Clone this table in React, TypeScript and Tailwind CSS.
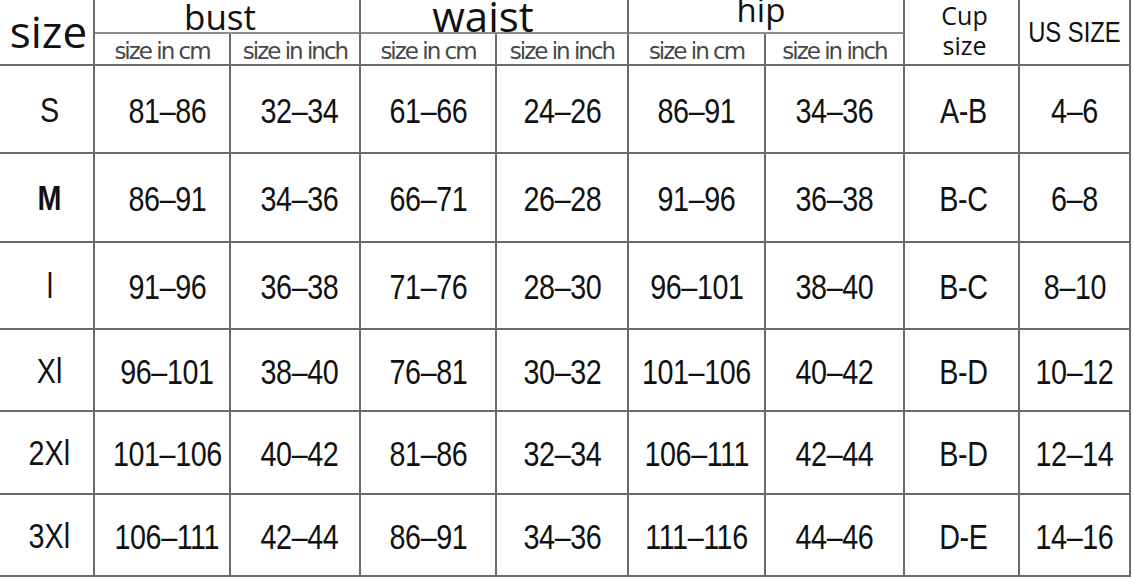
import React from "react";

const rows: { size: string; bold?: boolean; vals: string[]; h: string }[] = [
  { size: "S", vals: ["81–86", "32–34", "61–66", "24–26", "86–91", "34–36", "A-B", "4–6"], h: "h-[88px]" },
  { size: "M", bold: true, vals: ["86–91", "34–36", "66–71", "26–28", "91–96", "36–38", "B-C", "6–8"], h: "h-[89px]" },
  { size: "l", vals: ["91–96", "36–38", "71–76", "28–30", "96–101", "38–40", "B-C", "8–10"], h: "h-[87px]" },
  { size: "Xl", vals: ["96–101", "38–40", "76–81", "30–32", "101–106", "40–42", "B-D", "10–12"], h: "h-[82px]" },
  { size: "2Xl", vals: ["101–106", "40–42", "81–86", "32–34", "106–111", "42–44", "B-D", "12–14"], h: "h-[83px]" },
  { size: "3Xl", vals: ["106–111", "42–44", "86–91", "34–36", "111–116", "44–46", "D-E", "14–16"], h: "h-[82px]" },
];

const narrow =
  "inline-block whitespace-nowrap shrink-0 scale-x-[0.82] font-['Liberation_Sans','Arial',sans-serif]";
const open = "font-['Open_Sans','Noto_Sans',sans-serif]";
const sub =
  "whitespace-nowrap font-['DejaVu_Sans',sans-serif] text-[23px] tracking-[-2px] text-[#474747] leading-none mt-[4px]";

const colPad = ["pl-[10px]", "pl-[8px]", "", "", "", "", "pl-[4px]", ""];

export default function App() {
  return (
    <div className="w-[1133px] h-[578px] bg-white text-[#111111] overflow-hidden">
      <div className="grid grid-cols-[95px_136px_130px_136px_132px_137px_139px_115px_111px] grid-rows-[34px_32px]">
        {/* header */}
        <div className="row-span-2 border-r-2 border-b-2 border-[#6a6a6a] flex items-center justify-center">
          <span className={`${open} text-[44px] leading-none mb-[3px] ml-[4px]`}>size</span>
        </div>
        <div className="col-span-2 border-r-2 border-b-2 border-r-[#6a6a6a] border-b-[#8c8c8c] flex items-center justify-center">
          <span className={`${open} text-[35px] leading-none mr-[14px]`}>bust</span>
        </div>
        <div className="col-span-2 border-r-2 border-b-2 border-r-[#6a6a6a] border-b-[#8c8c8c] flex items-center justify-center">
          <span className={`${open} text-[42px] leading-none mr-[22px]`}>waist</span>
        </div>
        <div className="col-span-2 border-r-2 border-b-2 border-r-[#6a6a6a] border-b-[#8c8c8c] flex items-start justify-center">
          <span className={`${open} text-[33px] leading-none -mt-[7px] mr-[10px]`}>hip</span>
        </div>
        <div className="row-span-2 border-r-2 border-b-2 border-[#6a6a6a] flex items-center justify-center">
          <span className={`${open} text-[25px] leading-[30px] text-center -mt-[4px] ml-[6px]`}>
            Cup
            <br />
            size
          </span>
        </div>
        <div className="row-span-2 border-r-2 border-b-2 border-[#6a6a6a] flex items-center justify-center">
          <span className={`${narrow} text-[29px] leading-none mt-[1px]`}>US SIZE</span>
        </div>
        {/* sub header */}
        <div className="border-r-2 border-b-2 border-[#6a6a6a] flex items-center justify-center">
          <span className={sub}>size in cm</span>
        </div>
        <div className="border-r-2 border-b-2 border-[#6a6a6a] flex items-center justify-center">
          <span className={sub}>size in inch</span>
        </div>
        <div className="border-r-2 border-b-2 border-[#6a6a6a] flex items-center justify-center">
          <span className={sub}>size in cm</span>
        </div>
        <div className="border-r-2 border-b-2 border-[#6a6a6a] flex items-center justify-center">
          <span className={sub}>size in inch</span>
        </div>
        <div className="border-r-2 border-b-2 border-[#6a6a6a] flex items-center justify-center">
          <span className={sub}>size in cm</span>
        </div>
        <div className="border-r-2 border-b-2 border-[#6a6a6a] flex items-center justify-center">
          <span className={sub}>size in inch</span>
        </div>
      </div>
      {rows.map((r) => (
        <div
          key={r.size}
          className={`grid grid-cols-[95px_136px_130px_136px_132px_137px_139px_115px_111px] ${r.h}`}
        >
          <div className="border-r-2 border-b-2 border-[#6a6a6a] flex items-center justify-center pl-[6px]">
            <span className={`${narrow} text-[35px] leading-none ${r.bold ? "font-bold" : ""}`}>{r.size}</span>
          </div>
          {r.vals.map((v, i) => (
            <div
              key={i}
              className={`border-r-2 border-b-2 border-[#6a6a6a] flex items-center justify-center ${colPad[i]}`}
            >
              <span className={`${narrow} text-[35px] leading-none tracking-[-0.5px] mt-[2px]`}>{v}</span>
            </div>
          ))}
        </div>
      ))}
    </div>
  );
}
